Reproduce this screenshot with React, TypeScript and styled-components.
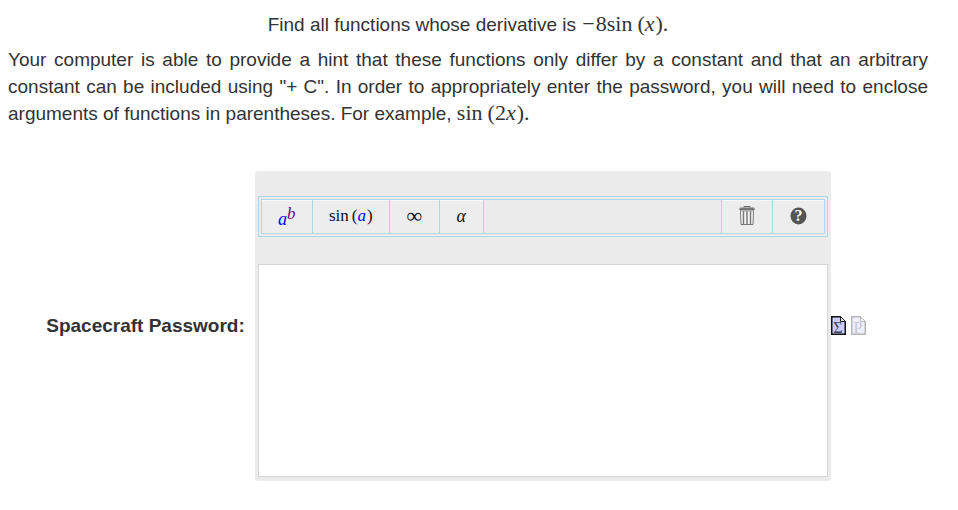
import React from "react";
import styled, { createGlobalStyle } from "styled-components";

const GlobalStyle = createGlobalStyle`
  * { box-sizing: border-box; }
  body {
    margin: 0;
    background: #fff;
    color: #333;
    font-family: "Liberation Sans", Arial, sans-serif;
    font-size: 19px;
    line-height: 27px;
  }
`;

const Page = styled.main`
  padding: 11px 30px 24px 8px;
`;

const Question = styled.p`
  margin: 0 0 8px;
  text-align: center;
`;

const Hint = styled.p`
  margin: 0;
  text-align: justify;
`;

const Formula = styled.span<{ $size?: number }>`
  font-family: "Liberation Serif", "Times New Roman", serif;
  font-size: ${(p) => p.$size ?? 22}px;
  line-height: 20px;
  white-space: nowrap;
`;

const Minus = styled.span`
  margin: 0 1px;
`;

const Paren = styled.span<{ $gap?: number }>`
  margin-left: ${(p) => p.$gap ?? 1}px;
`;

const Variable = styled.i<{ $color?: string }>`
  color: ${(p) => p.$color ?? "inherit"};
`;

const AnswerRow = styled.form`
  display: grid;
  grid-template-columns: auto minmax(0, 576px) auto;
  justify-content: center;
  align-items: center;
  margin-top: 44px;
  padding-right: 24px;
`;

const Label = styled.label`
  padding: 0 10px 2px 0;
  font-weight: bold;
  text-align: right;
`;

const Editor = styled.div`
  padding: 25px 3px 4px;
  background: #ebebeb;
  border-radius: 3px;
`;

const ToolbarFrame = styled.div`
  padding: 2px;
  border: 1px solid lightblue;
`;

const Toolbar = styled.div`
  display: flex;
  height: 35px;
  border: 1px solid lightblue;
`;

const ToolButton = styled.button<{ $width: number; $side?: "left" | "right" }>`
  display: flex;
  align-items: center;
  justify-content: center;
  flex: 0 0 ${(p) => p.$width}px;
  padding: 0 0 2px;
  border: 0 solid lightblue;
  border-right-width: ${(p) => (p.$side === "right" ? 0 : 1)}px;
  border-left-width: ${(p) => (p.$side === "right" ? 1 : 0)}px;
  background: #ededed;
  box-shadow: inset 0 1px 0 #f8f8f8;
  color: #111;
  cursor: pointer;
`;

const Spacer = styled.div`
  flex: 1;
`;

const Power = styled(Formula)`
  padding-top: 6px;
`;

const Exponent = styled.sup`
  color: purple;
  font-size: 17px;
  line-height: 0;
  font-style: italic;
  vertical-align: 6px;
`;

const AnswerBox = styled.textarea`
  display: block;
  width: 100%;
  height: 213px;
  margin-top: 27px;
  padding: 8px;
  border: 1px solid #d6d6d6;
  background: #fff;
  resize: none;
  font: 18px "Liberation Serif", serif;
`;

const Actions = styled.div`
  display: flex;
  gap: 5px;
  padding-bottom: 2px;
`;

const IconButton = styled.button<{ $faded?: boolean }>`
  display: flex;
  padding: 0;
  border: 0;
  background: none;
  opacity: ${(p) => (p.$faded ? 0.3 : 1)};
  cursor: pointer;
`;

const GlyphText = styled.text`
  font-family: "Liberation Serif", serif;
  font-size: 16px;
  fill: #44445c;
`;

function TrashIcon() {
  return (
    <svg width="16" height="19" viewBox="0 0 16 19" aria-hidden="true">
      <path d="M5 1.5V.5h6v1" fill="none" stroke="#666" />
      <path d="M1 1.5h14l1 2.5H0z" fill="#777" />
      <path d="M1.5 4h13l-.5 14.5H2z" fill="#f8f8f8" stroke="#777" />
      <path d="M4.500 5v13M8 5v13M11.500 5v13" stroke="#777" strokeWidth="1.500" />
      <path d="M1 5h14" stroke="#aaa" />
    </svg>
  );
}

const HelpMark = styled.text`
  font-family: "Liberation Serif", serif;
  font-size: 16px;
  font-weight: bold;
  fill: #fff;
`;

function HelpIcon() {
  return (
    <svg width="17" height="18" viewBox="0 0 17 18" aria-hidden="true">
      <ellipse cx="8.5" cy="9" rx="8" ry="8.500" fill="#555" />
      <HelpMark x="8.5" y="14" textAnchor="middle">?</HelpMark>
    </svg>
  );
}

function DocumentIcon({ glyph }: { glyph: string }) {
  return (
    <svg width="15" height="19" viewBox="0 0 15 19" aria-hidden="true">
      <path d="M.75 .75H9.500L14.250 5.500V18.250H.75z" fill="#ccccff" stroke="#111" strokeWidth="1.500" />
      <path d="M9.500 0H15v5.500z" fill="#fff" />
      <path d="M9.500 .5v5H14.500z" fill="#ddd" stroke="#222" />
      <GlyphText x="7" y="17" textAnchor="middle">{glyph}</GlyphText>
    </svg>
  );
}

export default function App() {
  return (
    <>
      <GlobalStyle />
      <Page>
        <Question>
          Find all functions whose derivative is{" "}
          <Formula>
            <Minus>−</Minus>8sin<Paren $gap={5}>(</Paren><Variable>x</Variable><Paren>)</Paren>.
          </Formula>
        </Question>
        <Hint>
          Your computer is able to provide a hint that these functions only differ by a constant
          and that an arbitrary constant can be included using "+ C". In order to appropriately
          enter the password, you will need to enclose arguments of functions in parentheses. For
          example,{" "}
          <Formula>
            sin<Paren $gap={5}>(</Paren>2<Variable>x</Variable><Paren>)</Paren>.
          </Formula>
        </Hint>

        <AnswerRow onSubmit={(e) => e.preventDefault()}>
          <Label htmlFor="password">Spacecraft Password:</Label>
          <Editor>
            <ToolbarFrame>
              <Toolbar role="toolbar" aria-label="Math input">
                <ToolButton type="button" $width={51} aria-label="Exponent">
                  <Power $size={18}>
                    <Variable $color="blue">a</Variable>
                    <Exponent>b</Exponent>
                  </Power>
                </ToolButton>
                <ToolButton type="button" $width={77} aria-label="Functions">
                  <Formula $size={17}>
                    sin<Paren $gap={3}>(</Paren><Variable $color="blue">a</Variable><Paren>)</Paren>
                  </Formula>
                </ToolButton>
                <ToolButton type="button" $width={50} aria-label="Symbols">
                  <Formula $size={22}>∞</Formula>
                </ToolButton>
                <ToolButton type="button" $width={44} aria-label="Greek letters">
                  <Formula $size={18}><Variable>α</Variable></Formula>
                </ToolButton>
                <Spacer />
                <ToolButton type="button" $width={51} $side="right" aria-label="Clear">
                  <TrashIcon />
                </ToolButton>
                <ToolButton type="button" $width={52} $side="right" aria-label="Help">
                  <HelpIcon />
                </ToolButton>
              </Toolbar>
            </ToolbarFrame>
            <AnswerBox id="password" />
          </Editor>
          <Actions>
            <IconButton type="button" aria-label="Equation editor">
              <DocumentIcon glyph="Σ" />
            </IconButton>
            <IconButton type="button" $faded aria-label="Preview">
              <DocumentIcon glyph="P" />
            </IconButton>
          </Actions>
        </AnswerRow>
      </Page>
    </>
  );
}
